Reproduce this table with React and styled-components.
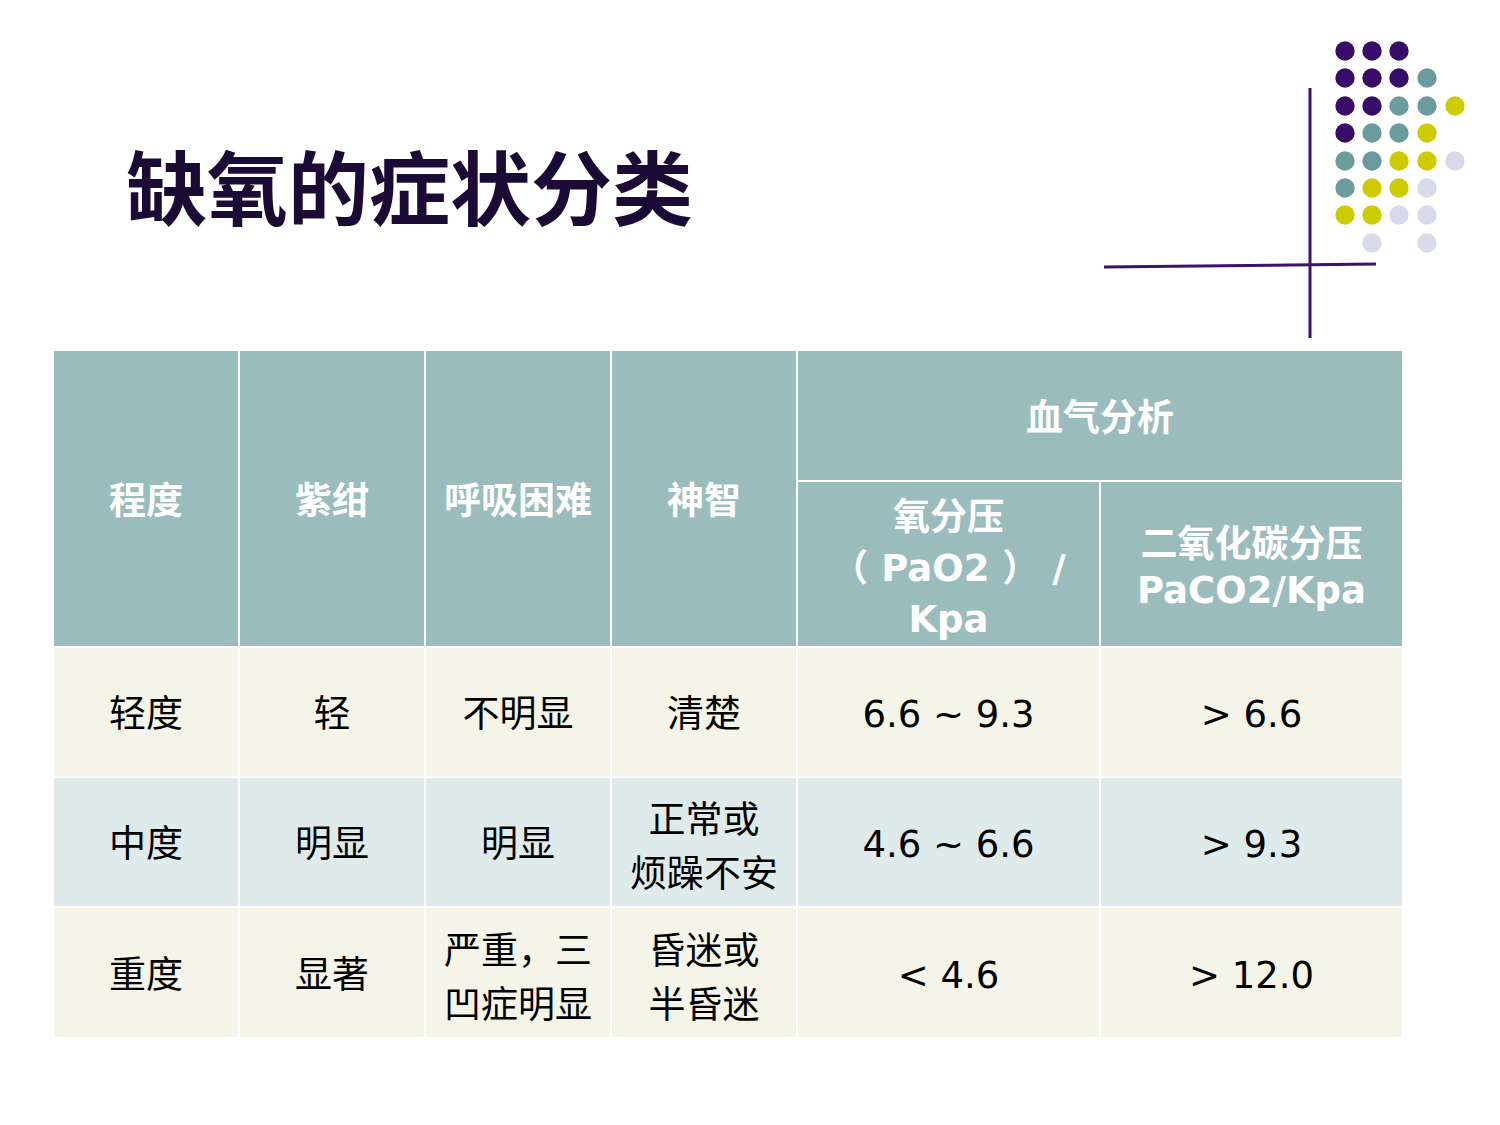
import React from 'react'
import styled, { createGlobalStyle } from 'styled-components'

const GlobalStyle = createGlobalStyle`
    html, body {
        margin: 0;
        padding: 0;
        background: #ffffff;
    }
    body {
        font-family: "DejaVu Sans", "Noto Sans CJK SC", sans-serif;
    }
`

const PURPLE = '#380c69'
const TEAL = '#6b9b9c'
const YELLOW = '#cccc00'
const LAVENDER = '#d9d9ec'

// dot pattern, one string per row, P/T/Y/L or '.' for empty
const dotRows = [
    'PPP..',
    'PPPT.',
    'PPTTY',
    'PTTY.',
    'TTYYL',
    'TYYL.',
    'YYLL.',
    '.L.L.',
]
const dotColors = { P: PURPLE, T: TEAL, Y: YELLOW, L: LAVENDER }
const dotX = [245, 272, 299, 327, 355]
const dotY = [21, 48, 76, 103, 131, 158, 185, 213]

const App = () => {
    return (
        <Page>
            <GlobalStyle />
            <Top>
                <Title>缺氧的症状分类</Title>
                <Ornament />
            </Top>
            <Table>
                <colgroup>
                    <col style={{ width: 185 }} />
                    <col style={{ width: 186 }} />
                    <col style={{ width: 186 }} />
                    <col style={{ width: 186 }} />
                    <col style={{ width: 303 }} />
                    <col style={{ width: 302 }} />
                </colgroup>
                <thead>
                    <HeadRow $h={130}>
                        <Th rowSpan={2}>程度</Th>
                        <Th rowSpan={2}>紫绀</Th>
                        <Th rowSpan={2}>呼吸困难</Th>
                        <Th rowSpan={2}>神智</Th>
                        <Th colSpan={2}>血气分析</Th>
                    </HeadRow>
                    <HeadRow $h={166}>
                        <Th $tall>氧分压<br />（ PaO2 ） /<br />Kpa</Th>
                        <Th $pad={8}>二氧化碳分压<br />PaCO2/Kpa</Th>
                    </HeadRow>
                </thead>
                <tbody>
                    <BodyRow $alt={false}>
                        <Td>轻度</Td>
                        <Td>轻</Td>
                        <Td>不明显</Td>
                        <Td>清楚</Td>
                        <Td>6.6 ~ 9.3</Td>
                        <Td>&gt; 6.6</Td>
                    </BodyRow>
                    <BodyRow $alt>
                        <Td>中度</Td>
                        <Td>明显</Td>
                        <Td>明显</Td>
                        <Td $pad={12}>正常或<br />烦躁不安</Td>
                        <Td>4.6 ~ 6.6</Td>
                        <Td>&gt; 9.3</Td>
                    </BodyRow>
                    <BodyRow $alt={false}>
                        <Td>重度</Td>
                        <Td>显著</Td>
                        <Td $pad={12}>严重，三<br />凹症明显</Td>
                        <Td $pad={12}>昏迷或<br />半昏迷</Td>
                        <Td>&lt; 4.6</Td>
                        <Td>&gt; 12.0</Td>
                    </BodyRow>
                </tbody>
            </Table>
        </Page>
    )
}

const Ornament = () => {
    return (
        <OrnamentSvg width="370" height="320" viewBox="0 0 370 320">
            {dotRows.map((row, r) =>
                row.split('').map((c, i) =>
                    c === '.' ? null : (
                        <circle key={r + '-' + i} cx={dotX[i]} cy={dotY[r]} r="9.7" fill={dotColors[c]} />
                    )
                )
            )}
            <line x1="210" y1="58" x2="210" y2="308" stroke="#3a1366" strokeWidth="3" />
            <line x1="4" y1="237" x2="276" y2="234" stroke="#3a1366" strokeWidth="3" />
        </OrnamentSvg>
    )
}

const Page = styled.div`
    width: 1500px;
    min-height: 1125px;
    background: #ffffff;
`

const Top = styled.div`
    height: 351px;
    display: flex;
    justify-content: space-between;
    align-items: flex-start;
`

const Title = styled.h1`
    margin: 144px 0 0 126px;
    font-family: "Noto Sans CJK SC", sans-serif;
    font-size: 81px;
    line-height: 80px;
    font-weight: 700;
    color: #1c0a36;
    letter-spacing: 0;
`

const OrnamentSvg = styled.svg`
    display: block;
    margin: 30px 30px 0 0;
`

const Table = styled.table`
    margin-left: 54px;
    width: 1348px;
    table-layout: fixed;
    border-collapse: collapse;
    border-style: hidden;
    font-size: 37px;
`

const HeadRow = styled.tr`
    height: ${p => p.$h}px;
    background: #9bbcbd;
`

const Th = styled.th`
    border: 2px solid #ffffff;
    padding: 0;
    padding-top: ${p => (p.$tall ? 8 : p.$pad || 6)}px;
    color: #ffffff;
    font-weight: 700;
    text-align: center;
    vertical-align: middle;
    line-height: ${p => (p.$tall ? '51px' : '46px')};
`

const BodyRow = styled.tr`
    height: 130px;
    background: ${p => (p.$alt ? '#dfeaeb' : '#f4f5e8')};
`

const Td = styled.td`
    border: 2px solid #ffffff;
    padding: 0;
    padding-top: ${p => p.$pad || 6}px;
    color: #000000;
    text-align: center;
    vertical-align: middle;
    line-height: 54px;
`

export default App
